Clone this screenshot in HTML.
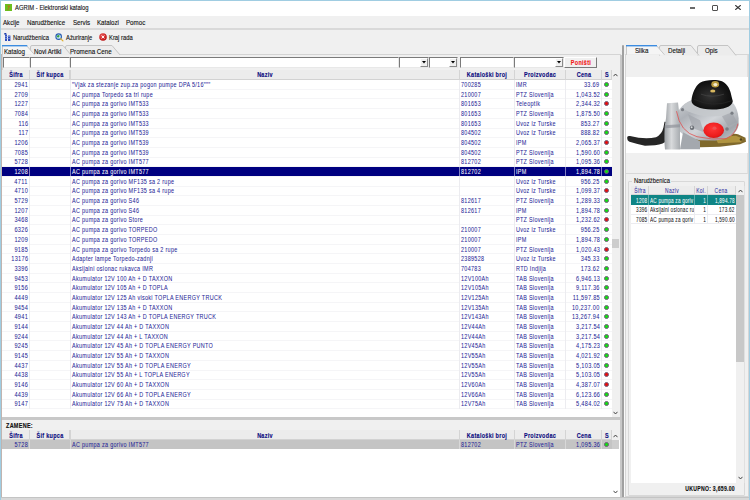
<!DOCTYPE html><html><head><meta charset="utf-8"><style>
*{margin:0;padding:0;box-sizing:border-box}
html,body{width:750px;height:500px;overflow:hidden;background:#f0f0f0;font-family:"Liberation Sans",sans-serif}
.a{position:absolute}
.c{position:absolute;white-space:nowrap;font-size:7px;color:#1e1e96}
.c span{display:inline-block;transform:scaleX(0.78);transform-origin:0 50%;letter-spacing:0.38px;-webkit-text-stroke:0.04px currentColor}
.c.r span{transform-origin:100% 50%;transform:scaleX(0.8)}
.c.m span{transform-origin:50% 50%}
.c.m{transform:translateX(-50%)}
.hd{font-weight:bold;color:#0c0c80}
.c.hd span{-webkit-text-stroke:0.15px currentColor}
.sel{color:#fff}
.n2{color:#2a2aa0;font-size:6.3px}
.sm{font-size:6.8px}
.c.sm span{transform:scaleX(0.69);letter-spacing:0.3px}
.dk{color:#111}
.dot{position:absolute;width:5px;height:5px;border-radius:50%;border:0.6px solid #705a78}
.ui{position:absolute;white-space:nowrap;font-size:7.2px;color:#111}
.ui span{display:inline-block;transform:scaleX(0.86);transform-origin:0 50%;-webkit-text-stroke:0.12px currentColor}
</style></head><body>
<div class="a" style="left:0;top:0;width:750px;height:500px;border:1px solid #a0cde2;border-bottom:none"></div>
<div class="a" style="left:1px;top:1px;width:748px;height:14.6px;background:#fff"></div>
<div class="a" style="left:4.7px;top:4px;width:7.3px;height:7.3px;background:#6cbf1e"></div>
<svg class="a" style="left:4.7px;top:4px" width="7.3" height="7.3" viewBox="0 0 10 10"><path d="M3 2 L7 2 L6 5 L4 9 L3 8 L5 5 Z" fill="#c8641e" opacity="0.85"/></svg>
<div class="ui" style="left:15px;top:4.2px;height:8px;line-height:8px;color:#111"><span style="transform:scaleX(0.815)">AGRIM - Elektronski katalog</span></div>
<div class="a" style="left:690px;top:7px;width:5.3px;height:1.5px;background:#6a6a6a"></div>
<div class="a" style="left:712px;top:4.8px;width:5.8px;height:5.8px;border:1.15px solid #505050;border-radius:1px"></div>
<svg class="a" style="left:735px;top:5.2px" width="6" height="5" viewBox="0 0 6 5"><path d="M0.3 0.2 L5.7 4.8 M5.7 0.2 L0.3 4.8" stroke="#333" stroke-width="1.1"/></svg>
<div class="a" style="left:1px;top:15.6px;width:748px;height:12.8px;background:#f0f0f0"></div>
<div class="ui" style="left:3.2px;top:18.9px;height:8px;line-height:8px"><span>Akcije</span></div>
<div class="ui" style="left:27.2px;top:18.9px;height:8px;line-height:8px"><span>Narudžbenice</span></div>
<div class="ui" style="left:72.5px;top:18.9px;height:8px;line-height:8px"><span>Servis</span></div>
<div class="ui" style="left:97.2px;top:18.9px;height:8px;line-height:8px"><span>Katalozi</span></div>
<div class="ui" style="left:126px;top:18.9px;height:8px;line-height:8px"><span>Pomoc</span></div>
<div class="a" style="left:1px;top:28.4px;width:748px;height:1.6px;background:#d9d9d9"></div>
<svg class="a" style="left:4px;top:33px" width="7" height="8" viewBox="0 0 7 8"><rect x="0.3" y="0" width="2" height="1.6" fill="#1a3aa8"/><rect x="1" y="1.5" width="2" height="6.5" fill="#3050c0"/><rect x="4" y="2.5" width="2.4" height="5.5" fill="#2a48b8"/><rect x="1.2" y="3" width="5" height="0.6" fill="#9ab0e8"/><rect x="1.2" y="5" width="5" height="0.6" fill="#9ab0e8"/></svg>
<div class="ui" style="left:13px;top:33.8px;height:8px;line-height:8px"><span style="transform:scaleX(0.81)">Narudžbenica</span></div>
<svg class="a" style="left:55.3px;top:33px" width="8.5" height="8.5" viewBox="0 0 10 10"><circle cx="4.3" cy="4.3" r="3.9" fill="#2a5cb0"/><circle cx="4.3" cy="4.3" r="2.6" fill="#c8ecf8"/><path d="M2.2 3.4 Q3.5 1.8 5.2 2.6 Q5.8 4.2 4.2 5.2 Q2.8 5.6 2.2 4.4 Z" fill="#3aa040"/><path d="M6.6 6.6 L9.3 9.3" stroke="#e0b030" stroke-width="1.5" stroke-linecap="round"/></svg>
<div class="ui" style="left:65.5px;top:33.8px;height:8px;line-height:8px"><span style="transform:scaleX(0.81)">Ažuriranje</span></div>
<svg class="a" style="left:99px;top:33.3px" width="8" height="8" viewBox="0 0 8 8"><defs><radialGradient id="kr" cx="0.4" cy="0.35" r="0.7"><stop offset="0" stop-color="#f06060"/><stop offset="1" stop-color="#b80a0a"/></radialGradient></defs><circle cx="4" cy="4" r="3.8" fill="url(#kr)"/><path d="M2.6 2.6 L5.4 5.4 M5.4 2.6 L2.6 5.4" stroke="#fff" stroke-width="0.95"/></svg>
<div class="ui" style="left:108.5px;top:33.8px;height:8px;line-height:8px"><span style="transform:scaleX(0.81)">Kraj rada</span></div>
<div class="a" style="left:1.5px;top:54px;width:619px;height:443px;background:#f0f0f0;border:1px solid #d4d4d4"></div>
<svg class="a" style="left:65px;top:44.8px" width="56" height="10.400000000000006" viewBox="0 0 56 10.400000000000006"><path d="M0.5 9.900000000000006 L0.5 2 Q0.5 0.5 2 0.5 L47 0.5 L55 9.900000000000006" fill="#ececec" stroke="#c4c4c4" stroke-width="1"/></svg><div class="ui" style="left:70px;top:47.599999999999994px;height:8px;line-height:8px"><span>Promena Cene</span></div>
<svg class="a" style="left:30px;top:44.8px" width="42" height="10.400000000000006" viewBox="0 0 42 10.400000000000006"><path d="M0.5 9.900000000000006 L0.5 2 Q0.5 0.5 2 0.5 L33 0.5 L41 9.900000000000006" fill="#ececec" stroke="#c4c4c4" stroke-width="1"/></svg><div class="ui" style="left:33.5px;top:47.599999999999994px;height:8px;line-height:8px"><span>Novi Artikl</span></div>
<svg class="a" style="left:1.5px;top:45px" width="33.5" height="10.200000000000003" viewBox="0 0 33.5 10.200000000000003"><path d="M0.5 9.700000000000003 L0.5 0.5 L24.5 0.5 L32.5 9.700000000000003" fill="#f5f5f5" stroke="#c8c8c8" stroke-width="1"/><rect x="0" y="0" width="25.3" height="1.4" fill="#3c8ce0"/></svg><div class="ui" style="left:3.5px;top:47.6px;height:8px;line-height:8px"><span>Katalog</span></div>
<div class="a" style="left:2.5px;top:57px;width:27.0px;height:10.6px;background:#fff;border-top:1.3px solid #7a7a7a;border-left:1.3px solid #7a7a7a;border-right:1px solid #e8e8e8;border-bottom:1px solid #e8e8e8"></div>
<div class="a" style="left:30px;top:57px;width:39.5px;height:10.6px;background:#fff;border-top:1.3px solid #7a7a7a;border-left:1.3px solid #7a7a7a;border-right:1px solid #e8e8e8;border-bottom:1px solid #e8e8e8"></div>
<div class="a" style="left:70px;top:57px;width:328.5px;height:10.6px;background:#fff;border-top:1.3px solid #7a7a7a;border-left:1.3px solid #7a7a7a;border-right:1px solid #e8e8e8;border-bottom:1px solid #e8e8e8"></div>
<div class="a" style="left:459.5px;top:57px;width:54.0px;height:10.6px;background:#fff;border-top:1.3px solid #7a7a7a;border-left:1.3px solid #7a7a7a;border-right:1px solid #e8e8e8;border-bottom:1px solid #e8e8e8"></div>
<div class="a" style="left:399px;top:57px;width:29.5px;height:10.6px;background:#fff;border-top:1.3px solid #7a7a7a;border-left:1.3px solid #7a7a7a;border-right:1px solid #e8e8e8;border-bottom:1px solid #e8e8e8"></div><div class="a" style="left:419.5px;top:58.3px;width:8px;height:8.6px;background:#f0f0f0;border-right:1px solid #8a8a8a;border-bottom:1px solid #8a8a8a;border-top:0.6px solid #fff;border-left:0.6px solid #fff"></div><svg class="a" style="left:421.5px;top:61.3px" width="4" height="3" viewBox="0 0 4 3"><path d="M0 0 L4 0 L2 2.5 Z" fill="#000"/></svg>
<div class="a" style="left:429px;top:57px;width:29px;height:10.6px;background:#fff;border-top:1.3px solid #7a7a7a;border-left:1.3px solid #7a7a7a;border-right:1px solid #e8e8e8;border-bottom:1px solid #e8e8e8"></div><div class="a" style="left:449px;top:58.3px;width:8px;height:8.6px;background:#f0f0f0;border-right:1px solid #8a8a8a;border-bottom:1px solid #8a8a8a;border-top:0.6px solid #fff;border-left:0.6px solid #fff"></div><svg class="a" style="left:451px;top:61.3px" width="4" height="3" viewBox="0 0 4 3"><path d="M0 0 L4 0 L2 2.5 Z" fill="#000"/></svg>
<div class="a" style="left:514px;top:57px;width:49.5px;height:10.6px;background:#fff;border-top:1.3px solid #7a7a7a;border-left:1.3px solid #7a7a7a;border-right:1px solid #e8e8e8;border-bottom:1px solid #e8e8e8"></div><div class="a" style="left:554.5px;top:58.3px;width:8px;height:8.6px;background:#f0f0f0;border-right:1px solid #8a8a8a;border-bottom:1px solid #8a8a8a;border-top:0.6px solid #fff;border-left:0.6px solid #fff"></div><svg class="a" style="left:556.5px;top:61.3px" width="4" height="3" viewBox="0 0 4 3"><path d="M0 0 L4 0 L2 2.5 Z" fill="#000"/></svg>
<div class="a" style="left:564px;top:57px;width:33px;height:10.6px;background:#f0f0f0;border-top:1px solid #fff;border-left:1px solid #fff;border-right:1.3px solid #7a7a7a;border-bottom:1.3px solid #7a7a7a"></div>
<div class="c hd" style="left:580.5px;top:58.2px;height:10.6px;line-height:10.6px;color:#f01818;transform:translateX(-50%)"><span style="transform-origin:50% 50%">Poništi</span></div>
<div class="a" style="left:2px;top:69.6px;width:618px;height:347.4px;background:#fff"></div>
<div class="a" style="left:2px;top:69.6px;width:610px;height:10.0px;background:#ececec;border-bottom:1px solid #d2d2d2"></div>
<div class="a" style="left:28.9px;top:69.6px;width:1.2px;height:10.0px;background:#d4d4d4"></div>
<div class="c m hd" style="left:15.75px;top:70.40px;height:10.00px;line-height:10.00px"><span>Šifra</span></div>
<div class="a" style="left:69.4px;top:69.6px;width:1.2px;height:10.0px;background:#d4d4d4"></div>
<div class="c m hd" style="left:49.75px;top:70.40px;height:10.00px;line-height:10.00px"><span>Šif kupca</span></div>
<div class="a" style="left:458.9px;top:69.6px;width:1.2px;height:10.0px;background:#d4d4d4"></div>
<div class="c m hd" style="left:264.75px;top:70.40px;height:10.00px;line-height:10.00px"><span>Naziv</span></div>
<div class="a" style="left:513.9px;top:69.6px;width:1.2px;height:10.0px;background:#d4d4d4"></div>
<div class="c m hd" style="left:487.00px;top:70.40px;height:10.00px;line-height:10.00px"><span>Kataloški broj</span></div>
<div class="a" style="left:564.9px;top:69.6px;width:1.2px;height:10.0px;background:#d4d4d4"></div>
<div class="c m hd" style="left:540.00px;top:70.40px;height:10.00px;line-height:10.00px"><span>Proizvodac</span></div>
<div class="a" style="left:600.9px;top:69.6px;width:1.2px;height:10.0px;background:#d4d4d4"></div>
<div class="c m hd" style="left:583.50px;top:70.40px;height:10.00px;line-height:10.00px"><span>Cena</span></div>
<div class="a" style="left:611.4px;top:69.6px;width:1.2px;height:10.0px;background:#d4d4d4"></div>
<div class="c m hd" style="left:606.75px;top:70.40px;height:10.00px;line-height:10.00px"><span>S</span></div>
<div class="a" style="left:2px;top:88.78px;width:610px;height:0.8px;background:#f5f5f7"></div>
<div class="a" style="left:2px;top:98.46px;width:610px;height:0.8px;background:#f5f5f7"></div>
<div class="a" style="left:2px;top:108.14px;width:610px;height:0.8px;background:#f5f5f7"></div>
<div class="a" style="left:2px;top:117.82px;width:610px;height:0.8px;background:#f5f5f7"></div>
<div class="a" style="left:2px;top:127.50px;width:610px;height:0.8px;background:#f5f5f7"></div>
<div class="a" style="left:2px;top:137.18px;width:610px;height:0.8px;background:#f5f5f7"></div>
<div class="a" style="left:2px;top:146.86px;width:610px;height:0.8px;background:#f5f5f7"></div>
<div class="a" style="left:2px;top:156.54px;width:610px;height:0.8px;background:#f5f5f7"></div>
<div class="a" style="left:2px;top:166.22px;width:610px;height:0.8px;background:#f5f5f7"></div>
<div class="a" style="left:2px;top:175.90px;width:610px;height:0.8px;background:#f5f5f7"></div>
<div class="a" style="left:2px;top:185.58px;width:610px;height:0.8px;background:#f5f5f7"></div>
<div class="a" style="left:2px;top:195.26px;width:610px;height:0.8px;background:#f5f5f7"></div>
<div class="a" style="left:2px;top:204.94px;width:610px;height:0.8px;background:#f5f5f7"></div>
<div class="a" style="left:2px;top:214.62px;width:610px;height:0.8px;background:#f5f5f7"></div>
<div class="a" style="left:2px;top:224.30px;width:610px;height:0.8px;background:#f5f5f7"></div>
<div class="a" style="left:2px;top:233.98px;width:610px;height:0.8px;background:#f5f5f7"></div>
<div class="a" style="left:2px;top:243.66px;width:610px;height:0.8px;background:#f5f5f7"></div>
<div class="a" style="left:2px;top:253.34px;width:610px;height:0.8px;background:#f5f5f7"></div>
<div class="a" style="left:2px;top:263.02px;width:610px;height:0.8px;background:#f5f5f7"></div>
<div class="a" style="left:2px;top:272.70px;width:610px;height:0.8px;background:#f5f5f7"></div>
<div class="a" style="left:2px;top:282.38px;width:610px;height:0.8px;background:#f5f5f7"></div>
<div class="a" style="left:2px;top:292.06px;width:610px;height:0.8px;background:#f5f5f7"></div>
<div class="a" style="left:2px;top:301.74px;width:610px;height:0.8px;background:#f5f5f7"></div>
<div class="a" style="left:2px;top:311.42px;width:610px;height:0.8px;background:#f5f5f7"></div>
<div class="a" style="left:2px;top:321.10px;width:610px;height:0.8px;background:#f5f5f7"></div>
<div class="a" style="left:2px;top:330.78px;width:610px;height:0.8px;background:#f5f5f7"></div>
<div class="a" style="left:2px;top:340.46px;width:610px;height:0.8px;background:#f5f5f7"></div>
<div class="a" style="left:2px;top:350.14px;width:610px;height:0.8px;background:#f5f5f7"></div>
<div class="a" style="left:2px;top:359.82px;width:610px;height:0.8px;background:#f5f5f7"></div>
<div class="a" style="left:2px;top:369.50px;width:610px;height:0.8px;background:#f5f5f7"></div>
<div class="a" style="left:2px;top:379.18px;width:610px;height:0.8px;background:#f5f5f7"></div>
<div class="a" style="left:2px;top:388.86px;width:610px;height:0.8px;background:#f5f5f7"></div>
<div class="a" style="left:2px;top:398.54px;width:610px;height:0.8px;background:#f5f5f7"></div>
<div class="a" style="left:2px;top:408.22px;width:610px;height:0.8px;background:#f5f5f7"></div>
<div class="a" style="left:29.0px;top:79.6px;width:0.8px;height:329.12px;background:#ececf0"></div>
<div class="a" style="left:69.5px;top:79.6px;width:0.8px;height:329.12px;background:#ececf0"></div>
<div class="a" style="left:459.0px;top:79.6px;width:0.8px;height:329.12px;background:#ececf0"></div>
<div class="a" style="left:514.0px;top:79.6px;width:0.8px;height:329.12px;background:#ececf0"></div>
<div class="a" style="left:565.0px;top:79.6px;width:0.8px;height:329.12px;background:#ececf0"></div>
<div class="a" style="left:601.0px;top:79.6px;width:0.8px;height:329.12px;background:#ececf0"></div>
<div class="c r t" style="right:722.10px;top:79.95px;height:9.68px;line-height:9.68px"><span>2941</span></div>
<div class="c t" style="left:71.60px;top:79.95px;height:9.68px;line-height:9.68px"><span>"Vjak za stezanje zup.za pogon pumpe DPA 5/16"""</span></div>
<div class="c t" style="left:461.10px;top:79.95px;height:9.68px;line-height:9.68px"><span>700285</span></div>
<div class="c t" style="left:516.10px;top:79.95px;height:9.68px;line-height:9.68px"><span>IMR</span></div>
<div class="c r t" style="right:150.10px;top:79.95px;height:9.68px;line-height:9.68px"><span>33.69</span></div>
<div class="dot" style="left:604.00px;top:81.94px;background:#10e010"></div>
<div class="c r t" style="right:722.10px;top:89.63px;height:9.68px;line-height:9.68px"><span>2709</span></div>
<div class="c t" style="left:71.60px;top:89.63px;height:9.68px;line-height:9.68px"><span>AC pumpa Torpedo sa tri rupe</span></div>
<div class="c t" style="left:461.10px;top:89.63px;height:9.68px;line-height:9.68px"><span>210007</span></div>
<div class="c t" style="left:516.10px;top:89.63px;height:9.68px;line-height:9.68px"><span>PTZ Slovenija</span></div>
<div class="c r t" style="right:150.10px;top:89.63px;height:9.68px;line-height:9.68px"><span>1,043.52</span></div>
<div class="dot" style="left:604.00px;top:91.62px;background:#10e010"></div>
<div class="c r t" style="right:722.10px;top:99.31px;height:9.68px;line-height:9.68px"><span>1227</span></div>
<div class="c t" style="left:71.60px;top:99.31px;height:9.68px;line-height:9.68px"><span>AC pumpa za gorivo IMT533</span></div>
<div class="c t" style="left:461.10px;top:99.31px;height:9.68px;line-height:9.68px"><span>801653</span></div>
<div class="c t" style="left:516.10px;top:99.31px;height:9.68px;line-height:9.68px"><span>Teleoptik</span></div>
<div class="c r t" style="right:150.10px;top:99.31px;height:9.68px;line-height:9.68px"><span>2,344.32</span></div>
<div class="dot" style="left:604.00px;top:101.30px;background:#e80c0c"></div>
<div class="c r t" style="right:722.10px;top:108.99px;height:9.68px;line-height:9.68px"><span>7084</span></div>
<div class="c t" style="left:71.60px;top:108.99px;height:9.68px;line-height:9.68px"><span>AC pumpa za gorivo IMT533</span></div>
<div class="c t" style="left:461.10px;top:108.99px;height:9.68px;line-height:9.68px"><span>801653</span></div>
<div class="c t" style="left:516.10px;top:108.99px;height:9.68px;line-height:9.68px"><span>PTZ Slovenija</span></div>
<div class="c r t" style="right:150.10px;top:108.99px;height:9.68px;line-height:9.68px"><span>1,875.50</span></div>
<div class="dot" style="left:604.00px;top:110.98px;background:#10e010"></div>
<div class="c r t" style="right:722.10px;top:118.67px;height:9.68px;line-height:9.68px"><span>116</span></div>
<div class="c t" style="left:71.60px;top:118.67px;height:9.68px;line-height:9.68px"><span>AC pumpa za gorivo IMT533</span></div>
<div class="c t" style="left:461.10px;top:118.67px;height:9.68px;line-height:9.68px"><span>801653</span></div>
<div class="c t" style="left:516.10px;top:118.67px;height:9.68px;line-height:9.68px"><span>Uvoz iz Turske</span></div>
<div class="c r t" style="right:150.10px;top:118.67px;height:9.68px;line-height:9.68px"><span>853.27</span></div>
<div class="dot" style="left:604.00px;top:120.66px;background:#10e010"></div>
<div class="c r t" style="right:722.10px;top:128.35px;height:9.68px;line-height:9.68px"><span>117</span></div>
<div class="c t" style="left:71.60px;top:128.35px;height:9.68px;line-height:9.68px"><span>AC pumpa za gorivo IMT539</span></div>
<div class="c t" style="left:461.10px;top:128.35px;height:9.68px;line-height:9.68px"><span>804502</span></div>
<div class="c t" style="left:516.10px;top:128.35px;height:9.68px;line-height:9.68px"><span>Uvoz iz Turske</span></div>
<div class="c r t" style="right:150.10px;top:128.35px;height:9.68px;line-height:9.68px"><span>888.82</span></div>
<div class="dot" style="left:604.00px;top:130.34px;background:#10e010"></div>
<div class="c r t" style="right:722.10px;top:138.03px;height:9.68px;line-height:9.68px"><span>1206</span></div>
<div class="c t" style="left:71.60px;top:138.03px;height:9.68px;line-height:9.68px"><span>AC pumpa za gorivo IMT539</span></div>
<div class="c t" style="left:461.10px;top:138.03px;height:9.68px;line-height:9.68px"><span>804502</span></div>
<div class="c t" style="left:516.10px;top:138.03px;height:9.68px;line-height:9.68px"><span>IPM</span></div>
<div class="c r t" style="right:150.10px;top:138.03px;height:9.68px;line-height:9.68px"><span>2,065.37</span></div>
<div class="dot" style="left:604.00px;top:140.02px;background:#e80c0c"></div>
<div class="c r t" style="right:722.10px;top:147.71px;height:9.68px;line-height:9.68px"><span>7085</span></div>
<div class="c t" style="left:71.60px;top:147.71px;height:9.68px;line-height:9.68px"><span>AC pumpa za gorivo IMT539</span></div>
<div class="c t" style="left:461.10px;top:147.71px;height:9.68px;line-height:9.68px"><span>804502</span></div>
<div class="c t" style="left:516.10px;top:147.71px;height:9.68px;line-height:9.68px"><span>PTZ Slovenija</span></div>
<div class="c r t" style="right:150.10px;top:147.71px;height:9.68px;line-height:9.68px"><span>1,590.60</span></div>
<div class="dot" style="left:604.00px;top:149.70px;background:#10e010"></div>
<div class="c r t" style="right:722.10px;top:157.39px;height:9.68px;line-height:9.68px"><span>5728</span></div>
<div class="c t" style="left:71.60px;top:157.39px;height:9.68px;line-height:9.68px"><span>AC pumpa za gorivo IMT577</span></div>
<div class="c t" style="left:461.10px;top:157.39px;height:9.68px;line-height:9.68px"><span>812702</span></div>
<div class="c t" style="left:516.10px;top:157.39px;height:9.68px;line-height:9.68px"><span>PTZ Slovenija</span></div>
<div class="c r t" style="right:150.10px;top:157.39px;height:9.68px;line-height:9.68px"><span>1,095.36</span></div>
<div class="dot" style="left:604.00px;top:159.38px;background:#10e010"></div>
<div class="a" style="left:2px;top:166.72px;width:610px;height:9.68px;background:#000080"></div>
<div class="a" style="left:29.0px;top:166.72px;width:0.8px;height:9.68px;background:#8080c0"></div>
<div class="a" style="left:69.5px;top:166.72px;width:0.8px;height:9.68px;background:#8080c0"></div>
<div class="a" style="left:459.0px;top:166.72px;width:0.8px;height:9.68px;background:#8080c0"></div>
<div class="a" style="left:514.0px;top:166.72px;width:0.8px;height:9.68px;background:#8080c0"></div>
<div class="a" style="left:565.0px;top:166.72px;width:0.8px;height:9.68px;background:#8080c0"></div>
<div class="a" style="left:601.0px;top:166.72px;width:0.8px;height:9.68px;background:#8080c0"></div>
<div class="c r sel" style="right:722.10px;top:167.07px;height:9.68px;line-height:9.68px"><span>1208</span></div>
<div class="c sel" style="left:71.60px;top:167.07px;height:9.68px;line-height:9.68px"><span>AC pumpa za gorivo IMT577</span></div>
<div class="c sel" style="left:461.10px;top:167.07px;height:9.68px;line-height:9.68px"><span>812702</span></div>
<div class="c sel" style="left:516.10px;top:167.07px;height:9.68px;line-height:9.68px"><span>IPM</span></div>
<div class="c r sel" style="right:150.10px;top:167.07px;height:9.68px;line-height:9.68px"><span>1,894.78</span></div>
<div class="dot" style="left:604.00px;top:169.06px;background:#10e010"></div>
<div class="c r t" style="right:722.10px;top:176.75px;height:9.68px;line-height:9.68px"><span>4711</span></div>
<div class="c t" style="left:71.60px;top:176.75px;height:9.68px;line-height:9.68px"><span>AC pumpa za gorivo MF135 sa 2 rupe</span></div>

<div class="c t" style="left:516.10px;top:176.75px;height:9.68px;line-height:9.68px"><span>Uvoz iz Turske</span></div>
<div class="c r t" style="right:150.10px;top:176.75px;height:9.68px;line-height:9.68px"><span>956.25</span></div>
<div class="dot" style="left:604.00px;top:178.74px;background:#10e010"></div>
<div class="c r t" style="right:722.10px;top:186.43px;height:9.68px;line-height:9.68px"><span>4710</span></div>
<div class="c t" style="left:71.60px;top:186.43px;height:9.68px;line-height:9.68px"><span>AC pumpa za gorivo MF135 sa 4 rupe</span></div>

<div class="c t" style="left:516.10px;top:186.43px;height:9.68px;line-height:9.68px"><span>Uvoz iz Turske</span></div>
<div class="c r t" style="right:150.10px;top:186.43px;height:9.68px;line-height:9.68px"><span>1,099.37</span></div>
<div class="dot" style="left:604.00px;top:188.42px;background:#e80c0c"></div>
<div class="c r t" style="right:722.10px;top:196.11px;height:9.68px;line-height:9.68px"><span>5729</span></div>
<div class="c t" style="left:71.60px;top:196.11px;height:9.68px;line-height:9.68px"><span>AC pumpa za gorivo S46</span></div>
<div class="c t" style="left:461.10px;top:196.11px;height:9.68px;line-height:9.68px"><span>812617</span></div>
<div class="c t" style="left:516.10px;top:196.11px;height:9.68px;line-height:9.68px"><span>PTZ Slovenija</span></div>
<div class="c r t" style="right:150.10px;top:196.11px;height:9.68px;line-height:9.68px"><span>1,289.33</span></div>
<div class="dot" style="left:604.00px;top:198.10px;background:#10e010"></div>
<div class="c r t" style="right:722.10px;top:205.79px;height:9.68px;line-height:9.68px"><span>1207</span></div>
<div class="c t" style="left:71.60px;top:205.79px;height:9.68px;line-height:9.68px"><span>AC pumpa za gorivo S46</span></div>
<div class="c t" style="left:461.10px;top:205.79px;height:9.68px;line-height:9.68px"><span>812617</span></div>
<div class="c t" style="left:516.10px;top:205.79px;height:9.68px;line-height:9.68px"><span>IPM</span></div>
<div class="c r t" style="right:150.10px;top:205.79px;height:9.68px;line-height:9.68px"><span>1,894.78</span></div>
<div class="dot" style="left:604.00px;top:207.78px;background:#10e010"></div>
<div class="c r t" style="right:722.10px;top:215.47px;height:9.68px;line-height:9.68px"><span>3468</span></div>
<div class="c t" style="left:71.60px;top:215.47px;height:9.68px;line-height:9.68px"><span>AC pumpa za gorivo Store</span></div>

<div class="c t" style="left:516.10px;top:215.47px;height:9.68px;line-height:9.68px"><span>PTZ Slovenija</span></div>
<div class="c r t" style="right:150.10px;top:215.47px;height:9.68px;line-height:9.68px"><span>1,232.62</span></div>
<div class="dot" style="left:604.00px;top:217.46px;background:#e80c0c"></div>
<div class="c r t" style="right:722.10px;top:225.15px;height:9.68px;line-height:9.68px"><span>6326</span></div>
<div class="c t" style="left:71.60px;top:225.15px;height:9.68px;line-height:9.68px"><span>AC pumpa za gorivo TORPEDO</span></div>
<div class="c t" style="left:461.10px;top:225.15px;height:9.68px;line-height:9.68px"><span>210007</span></div>
<div class="c t" style="left:516.10px;top:225.15px;height:9.68px;line-height:9.68px"><span>Uvoz iz Turske</span></div>
<div class="c r t" style="right:150.10px;top:225.15px;height:9.68px;line-height:9.68px"><span>956.25</span></div>
<div class="dot" style="left:604.00px;top:227.14px;background:#10e010"></div>
<div class="c r t" style="right:722.10px;top:234.83px;height:9.68px;line-height:9.68px"><span>1209</span></div>
<div class="c t" style="left:71.60px;top:234.83px;height:9.68px;line-height:9.68px"><span>AC pumpa za gorivo TORPEDO</span></div>
<div class="c t" style="left:461.10px;top:234.83px;height:9.68px;line-height:9.68px"><span>210007</span></div>
<div class="c t" style="left:516.10px;top:234.83px;height:9.68px;line-height:9.68px"><span>IPM</span></div>
<div class="c r t" style="right:150.10px;top:234.83px;height:9.68px;line-height:9.68px"><span>1,894.78</span></div>
<div class="dot" style="left:604.00px;top:236.82px;background:#10e010"></div>
<div class="c r t" style="right:722.10px;top:244.51px;height:9.68px;line-height:9.68px"><span>9185</span></div>
<div class="c t" style="left:71.60px;top:244.51px;height:9.68px;line-height:9.68px"><span>AC pumpa za gorivo Torpedo sa 2 rupe</span></div>
<div class="c t" style="left:461.10px;top:244.51px;height:9.68px;line-height:9.68px"><span>210007</span></div>
<div class="c t" style="left:516.10px;top:244.51px;height:9.68px;line-height:9.68px"><span>PTZ Slovenija</span></div>
<div class="c r t" style="right:150.10px;top:244.51px;height:9.68px;line-height:9.68px"><span>1,020.43</span></div>
<div class="dot" style="left:604.00px;top:246.50px;background:#e80c0c"></div>
<div class="c r t" style="right:722.10px;top:254.19px;height:9.68px;line-height:9.68px"><span>13176</span></div>
<div class="c t" style="left:71.60px;top:254.19px;height:9.68px;line-height:9.68px"><span>Adapter lampe Torpedo-zadnji</span></div>
<div class="c t" style="left:461.10px;top:254.19px;height:9.68px;line-height:9.68px"><span>2389528</span></div>
<div class="c t" style="left:516.10px;top:254.19px;height:9.68px;line-height:9.68px"><span>Uvoz iz Turske</span></div>
<div class="c r t" style="right:150.10px;top:254.19px;height:9.68px;line-height:9.68px"><span>345.33</span></div>
<div class="dot" style="left:604.00px;top:256.18px;background:#10e010"></div>
<div class="c r t" style="right:722.10px;top:263.87px;height:9.68px;line-height:9.68px"><span>3396</span></div>
<div class="c t" style="left:71.60px;top:263.87px;height:9.68px;line-height:9.68px"><span>Aksijalni oslonac rukavca IMR</span></div>
<div class="c t" style="left:461.10px;top:263.87px;height:9.68px;line-height:9.68px"><span>704783</span></div>
<div class="c t" style="left:516.10px;top:263.87px;height:9.68px;line-height:9.68px"><span>RTD Indjija</span></div>
<div class="c r t" style="right:150.10px;top:263.87px;height:9.68px;line-height:9.68px"><span>173.62</span></div>
<div class="dot" style="left:604.00px;top:265.86px;background:#10e010"></div>
<div class="c r t" style="right:722.10px;top:273.55px;height:9.68px;line-height:9.68px"><span>9453</span></div>
<div class="c t" style="left:71.60px;top:273.55px;height:9.68px;line-height:9.68px"><span>Akumulator 12V 100 Ah + D TAXXON</span></div>
<div class="c t" style="left:461.10px;top:273.55px;height:9.68px;line-height:9.68px"><span>12V100Ah</span></div>
<div class="c t" style="left:516.10px;top:273.55px;height:9.68px;line-height:9.68px"><span>TAB Slovenija</span></div>
<div class="c r t" style="right:150.10px;top:273.55px;height:9.68px;line-height:9.68px"><span>6,946.13</span></div>
<div class="dot" style="left:604.00px;top:275.54px;background:#10e010"></div>
<div class="c r t" style="right:722.10px;top:283.23px;height:9.68px;line-height:9.68px"><span>9156</span></div>
<div class="c t" style="left:71.60px;top:283.23px;height:9.68px;line-height:9.68px"><span>Akumulator 12V 105 Ah + D TOPLA</span></div>
<div class="c t" style="left:461.10px;top:283.23px;height:9.68px;line-height:9.68px"><span>12V105Ah</span></div>
<div class="c t" style="left:516.10px;top:283.23px;height:9.68px;line-height:9.68px"><span>TAB Slovenija</span></div>
<div class="c r t" style="right:150.10px;top:283.23px;height:9.68px;line-height:9.68px"><span>9,117.36</span></div>
<div class="dot" style="left:604.00px;top:285.22px;background:#10e010"></div>
<div class="c r t" style="right:722.10px;top:292.91px;height:9.68px;line-height:9.68px"><span>4449</span></div>
<div class="c t" style="left:71.60px;top:292.91px;height:9.68px;line-height:9.68px"><span>Akumulator 12V 125 Ah visoki TOPLA ENERGY TRUCK</span></div>
<div class="c t" style="left:461.10px;top:292.91px;height:9.68px;line-height:9.68px"><span>12V125Ah</span></div>
<div class="c t" style="left:516.10px;top:292.91px;height:9.68px;line-height:9.68px"><span>TAB Slovenija</span></div>
<div class="c r t" style="right:150.10px;top:292.91px;height:9.68px;line-height:9.68px"><span>11,597.85</span></div>
<div class="dot" style="left:604.00px;top:294.90px;background:#10e010"></div>
<div class="c r t" style="right:722.10px;top:302.59px;height:9.68px;line-height:9.68px"><span>9454</span></div>
<div class="c t" style="left:71.60px;top:302.59px;height:9.68px;line-height:9.68px"><span>Akumulator 12V 135 Ah + D TAXXON</span></div>
<div class="c t" style="left:461.10px;top:302.59px;height:9.68px;line-height:9.68px"><span>12V135Ah</span></div>
<div class="c t" style="left:516.10px;top:302.59px;height:9.68px;line-height:9.68px"><span>TAB Slovenija</span></div>
<div class="c r t" style="right:150.10px;top:302.59px;height:9.68px;line-height:9.68px"><span>10,237.00</span></div>
<div class="dot" style="left:604.00px;top:304.58px;background:#10e010"></div>
<div class="c r t" style="right:722.10px;top:312.27px;height:9.68px;line-height:9.68px"><span>4941</span></div>
<div class="c t" style="left:71.60px;top:312.27px;height:9.68px;line-height:9.68px"><span>Akumulator 12V 143 Ah + D TOPLA ENERGY TRUCK</span></div>
<div class="c t" style="left:461.10px;top:312.27px;height:9.68px;line-height:9.68px"><span>12V143Ah</span></div>
<div class="c t" style="left:516.10px;top:312.27px;height:9.68px;line-height:9.68px"><span>TAB Slovenija</span></div>
<div class="c r t" style="right:150.10px;top:312.27px;height:9.68px;line-height:9.68px"><span>13,267.94</span></div>
<div class="dot" style="left:604.00px;top:314.26px;background:#10e010"></div>
<div class="c r t" style="right:722.10px;top:321.95px;height:9.68px;line-height:9.68px"><span>9144</span></div>
<div class="c t" style="left:71.60px;top:321.95px;height:9.68px;line-height:9.68px"><span>Akumulator 12V 44 Ah + D TAXXON</span></div>
<div class="c t" style="left:461.10px;top:321.95px;height:9.68px;line-height:9.68px"><span>12V44Ah</span></div>
<div class="c t" style="left:516.10px;top:321.95px;height:9.68px;line-height:9.68px"><span>TAB Slovenija</span></div>
<div class="c r t" style="right:150.10px;top:321.95px;height:9.68px;line-height:9.68px"><span>3,217.54</span></div>
<div class="dot" style="left:604.00px;top:323.94px;background:#10e010"></div>
<div class="c r t" style="right:722.10px;top:331.63px;height:9.68px;line-height:9.68px"><span>9244</span></div>
<div class="c t" style="left:71.60px;top:331.63px;height:9.68px;line-height:9.68px"><span>Akumulator 12V 44 Ah + L TAXXON</span></div>
<div class="c t" style="left:461.10px;top:331.63px;height:9.68px;line-height:9.68px"><span>12V44Ah</span></div>
<div class="c t" style="left:516.10px;top:331.63px;height:9.68px;line-height:9.68px"><span>TAB Slovenija</span></div>
<div class="c r t" style="right:150.10px;top:331.63px;height:9.68px;line-height:9.68px"><span>3,217.54</span></div>
<div class="dot" style="left:604.00px;top:333.62px;background:#10e010"></div>
<div class="c r t" style="right:722.10px;top:341.31px;height:9.68px;line-height:9.68px"><span>9245</span></div>
<div class="c t" style="left:71.60px;top:341.31px;height:9.68px;line-height:9.68px"><span>Akumulator 12V 45 Ah + D TOPLA ENERGY PUNTO</span></div>
<div class="c t" style="left:461.10px;top:341.31px;height:9.68px;line-height:9.68px"><span>12V45Ah</span></div>
<div class="c t" style="left:516.10px;top:341.31px;height:9.68px;line-height:9.68px"><span>TAB Slovenija</span></div>
<div class="c r t" style="right:150.10px;top:341.31px;height:9.68px;line-height:9.68px"><span>4,175.23</span></div>
<div class="dot" style="left:604.00px;top:343.30px;background:#10e010"></div>
<div class="c r t" style="right:722.10px;top:350.99px;height:9.68px;line-height:9.68px"><span>9145</span></div>
<div class="c t" style="left:71.60px;top:350.99px;height:9.68px;line-height:9.68px"><span>Akumulator 12V 55 Ah + D TAXXON</span></div>
<div class="c t" style="left:461.10px;top:350.99px;height:9.68px;line-height:9.68px"><span>12V55Ah</span></div>
<div class="c t" style="left:516.10px;top:350.99px;height:9.68px;line-height:9.68px"><span>TAB Slovenija</span></div>
<div class="c r t" style="right:150.10px;top:350.99px;height:9.68px;line-height:9.68px"><span>4,021.92</span></div>
<div class="dot" style="left:604.00px;top:352.98px;background:#10e010"></div>
<div class="c r t" style="right:722.10px;top:360.67px;height:9.68px;line-height:9.68px"><span>4437</span></div>
<div class="c t" style="left:71.60px;top:360.67px;height:9.68px;line-height:9.68px"><span>Akumulator 12V 55 Ah + D TOPLA ENERGY</span></div>
<div class="c t" style="left:461.10px;top:360.67px;height:9.68px;line-height:9.68px"><span>12V55Ah</span></div>
<div class="c t" style="left:516.10px;top:360.67px;height:9.68px;line-height:9.68px"><span>TAB Slovenija</span></div>
<div class="c r t" style="right:150.10px;top:360.67px;height:9.68px;line-height:9.68px"><span>5,103.05</span></div>
<div class="dot" style="left:604.00px;top:362.66px;background:#10e010"></div>
<div class="c r t" style="right:722.10px;top:370.35px;height:9.68px;line-height:9.68px"><span>4438</span></div>
<div class="c t" style="left:71.60px;top:370.35px;height:9.68px;line-height:9.68px"><span>Akumulator 12V 55 Ah + L TOPLA ENERGY</span></div>
<div class="c t" style="left:461.10px;top:370.35px;height:9.68px;line-height:9.68px"><span>12V55Ah</span></div>
<div class="c t" style="left:516.10px;top:370.35px;height:9.68px;line-height:9.68px"><span>TAB Slovenija</span></div>
<div class="c r t" style="right:150.10px;top:370.35px;height:9.68px;line-height:9.68px"><span>5,103.05</span></div>
<div class="dot" style="left:604.00px;top:372.34px;background:#e80c0c"></div>
<div class="c r t" style="right:722.10px;top:380.03px;height:9.68px;line-height:9.68px"><span>9146</span></div>
<div class="c t" style="left:71.60px;top:380.03px;height:9.68px;line-height:9.68px"><span>Akumulator 12V 60 Ah + D TAXXON</span></div>
<div class="c t" style="left:461.10px;top:380.03px;height:9.68px;line-height:9.68px"><span>12V60Ah</span></div>
<div class="c t" style="left:516.10px;top:380.03px;height:9.68px;line-height:9.68px"><span>TAB Slovenija</span></div>
<div class="c r t" style="right:150.10px;top:380.03px;height:9.68px;line-height:9.68px"><span>4,387.07</span></div>
<div class="dot" style="left:604.00px;top:382.02px;background:#e80c0c"></div>
<div class="c r t" style="right:722.10px;top:389.71px;height:9.68px;line-height:9.68px"><span>4439</span></div>
<div class="c t" style="left:71.60px;top:389.71px;height:9.68px;line-height:9.68px"><span>Akumulator 12V 66 Ah + D TOPLA ENERGY</span></div>
<div class="c t" style="left:461.10px;top:389.71px;height:9.68px;line-height:9.68px"><span>12V66Ah</span></div>
<div class="c t" style="left:516.10px;top:389.71px;height:9.68px;line-height:9.68px"><span>TAB Slovenija</span></div>
<div class="c r t" style="right:150.10px;top:389.71px;height:9.68px;line-height:9.68px"><span>6,123.66</span></div>
<div class="dot" style="left:604.00px;top:391.70px;background:#10e010"></div>
<div class="c r t" style="right:722.10px;top:399.39px;height:9.68px;line-height:9.68px"><span>9147</span></div>
<div class="c t" style="left:71.60px;top:399.39px;height:9.68px;line-height:9.68px"><span>Akumulator 12V 75 Ah + D TAXXON</span></div>
<div class="c t" style="left:461.10px;top:399.39px;height:9.68px;line-height:9.68px"><span>12V75Ah</span></div>
<div class="c t" style="left:516.10px;top:399.39px;height:9.68px;line-height:9.68px"><span>TAB Slovenija</span></div>
<div class="c r t" style="right:150.10px;top:399.39px;height:9.68px;line-height:9.68px"><span>5,484.02</span></div>
<div class="dot" style="left:604.00px;top:401.38px;background:#10e010"></div>
<div class="a" style="left:612px;top:69.6px;width:8px;height:347.4px;background:#f0f0f0"></div>
<svg class="a" style="left:613px;top:72.5px" width="5" height="4" viewBox="0 0 5 4"><path d="M0.5 3.2 L2.5 1 L4.5 3.2" stroke="#333" stroke-width="0.9" fill="none"/></svg>
<svg class="a" style="left:613px;top:410.5px" width="5" height="4" viewBox="0 0 5 4"><path d="M0.5 0.8 L2.5 3 L4.5 0.8" stroke="#333" stroke-width="0.9" fill="none"/></svg>
<div class="a" style="left:612.3px;top:239.2px;width:7px;height:8.8px;background:#cdcdcd"></div>
<div class="a" style="left:2px;top:417px;width:618px;height:3px;background:#c8c8c8"></div>
<div class="a" style="left:2px;top:420px;width:618px;height:10px;background:#f0f0f0"></div>
<div class="c hd" style="left:6px;top:420.8px;height:9.5px;line-height:9.5px;color:#111"><span>ZAMENE:</span></div>
<div class="a" style="left:2px;top:430px;width:618px;height:66.5px;background:#fff"></div>
<div class="a" style="left:2px;top:430px;width:610px;height:10.0px;background:#ececec;border-bottom:1px solid #d2d2d2"></div>
<div class="a" style="left:28.9px;top:430px;width:1.2px;height:10.0px;background:#d4d4d4"></div>
<div class="c m hd" style="left:15.75px;top:430.80px;height:10.00px;line-height:10.00px"><span>Šifra</span></div>
<div class="a" style="left:69.4px;top:430px;width:1.2px;height:10.0px;background:#d4d4d4"></div>
<div class="c m hd" style="left:49.75px;top:430.80px;height:10.00px;line-height:10.00px"><span>Šif kupca</span></div>
<div class="a" style="left:458.9px;top:430px;width:1.2px;height:10.0px;background:#d4d4d4"></div>
<div class="c m hd" style="left:264.75px;top:430.80px;height:10.00px;line-height:10.00px"><span>Naziv</span></div>
<div class="a" style="left:513.9px;top:430px;width:1.2px;height:10.0px;background:#d4d4d4"></div>
<div class="c m hd" style="left:487.00px;top:430.80px;height:10.00px;line-height:10.00px"><span>Kataloški broj</span></div>
<div class="a" style="left:564.9px;top:430px;width:1.2px;height:10.0px;background:#d4d4d4"></div>
<div class="c m hd" style="left:540.00px;top:430.80px;height:10.00px;line-height:10.00px"><span>Proizvodac</span></div>
<div class="a" style="left:600.9px;top:430px;width:1.2px;height:10.0px;background:#d4d4d4"></div>
<div class="c m hd" style="left:583.50px;top:430.80px;height:10.00px;line-height:10.00px"><span>Cena</span></div>
<div class="a" style="left:611.4px;top:430px;width:1.2px;height:10.0px;background:#d4d4d4"></div>
<div class="c m hd" style="left:606.75px;top:430.80px;height:10.00px;line-height:10.00px"><span>S</span></div>
<div class="a" style="left:2px;top:440px;width:610px;height:9.2px;background:#c4c4c4"></div>
<div class="a" style="left:29.0px;top:440px;width:0.8px;height:9.2px;background:#d8d8d8"></div>
<div class="a" style="left:69.5px;top:440px;width:0.8px;height:9.2px;background:#d8d8d8"></div>
<div class="a" style="left:459.0px;top:440px;width:0.8px;height:9.2px;background:#d8d8d8"></div>
<div class="a" style="left:514.0px;top:440px;width:0.8px;height:9.2px;background:#d8d8d8"></div>
<div class="a" style="left:565.0px;top:440px;width:0.8px;height:9.2px;background:#d8d8d8"></div>
<div class="a" style="left:601.0px;top:440px;width:0.8px;height:9.2px;background:#d8d8d8"></div>
<div class="c r t" style="right:722.10px;top:440.00px;height:9.20px;line-height:9.20px"><span>5728</span></div>
<div class="c t" style="left:71.60px;top:440.00px;height:9.20px;line-height:9.20px"><span>AC pumpa za gorivo IMT577</span></div>
<div class="c t" style="left:461.10px;top:440.00px;height:9.20px;line-height:9.20px"><span>812702</span></div>
<div class="c t" style="left:516.10px;top:440.00px;height:9.20px;line-height:9.20px"><span>PTZ Slovenija</span></div>
<div class="c r t" style="right:150.10px;top:440.00px;height:9.20px;line-height:9.20px"><span>1,095.36</span></div>
<div class="dot" style="left:603.80px;top:442.10px;background:#10e010"></div>
<div class="a" style="left:612px;top:430px;width:8px;height:10.0px;background:#f0f0f0"></div>
<svg class="a" style="left:613px;top:433.5px" width="5" height="4" viewBox="0 0 5 4"><path d="M0.5 3.2 L2.5 1 L4.5 3.2" stroke="#333" stroke-width="0.9" fill="none"/></svg>
<div class="a" style="left:612.3px;top:440px;width:7px;height:9.2px;background:#cdcdcd"></div>
<svg class="a" style="left:613px;top:490px" width="5" height="4" viewBox="0 0 5 4"><path d="M0.5 0.8 L2.5 3 L4.5 0.8" stroke="#333" stroke-width="0.9" fill="none"/></svg>
<div class="a" style="left:1px;top:496.5px;width:748px;height:1.5px;background:#c4c4c4"></div>
<div class="a" style="left:1px;top:498px;width:748px;height:2px;background:#d8d8d8"></div>
<div class="a" style="left:1px;top:54px;width:1px;height:443px;background:#c0b4b0"></div>
<div class="a" style="left:620.6px;top:44px;width:4.5px;height:453px;background:#f0f0f0"></div>
<div class="a" style="left:620px;top:54.5px;width:2px;height:442.5px;background:#c8c8c8"></div>
<div class="a" style="left:622px;top:44.5px;width:2px;height:452.5px;background:#a0a0a0;border-radius:1px 1px 0 0"></div>
<div class="a" style="left:624px;top:55px;width:1.5px;height:442px;background:#fafafa"></div>
<div class="a" style="left:625px;top:54px;width:123.5px;height:443px;background:#f0f0f0;border:1px solid #d6d6d6"></div>
<svg class="a" style="left:697px;top:44.6px" width="40" height="11" viewBox="0 0 40 11"><path d="M0.5 10.5 L0.5 2 Q0.5 0.5 2 0.5 L31 0.5 L39 10.5" fill="#ececec" stroke="#c4c4c4" stroke-width="1"/></svg><div class="ui" style="left:705.4px;top:47.4px;height:8px;line-height:8px"><span>Opis</span></div>
<svg class="a" style="left:659px;top:44.6px" width="41" height="11" viewBox="0 0 41 11"><path d="M0.5 10.5 L0.5 2 Q0.5 0.5 2 0.5 L32 0.5 L40 10.5" fill="#ececec" stroke="#c4c4c4" stroke-width="1"/></svg><div class="ui" style="left:667.6px;top:47.4px;height:8px;line-height:8px"><span>Detalji</span></div>
<svg class="a" style="left:625.5px;top:45px" width="40" height="10" viewBox="0 0 40 10"><path d="M0.5 9.8 L0.5 0.5 L30.5 0.5 L38.5 9.8" fill="#f5f5f5" stroke="#c8c8c8" stroke-width="1"/><rect x="0" y="0" width="31" height="1.4" fill="#3c8ce0"/></svg>
<div class="ui" style="left:635px;top:47px;height:8px;line-height:8px"><span>Slika</span></div>
<div class="a" style="left:625.6px;top:55px;width:122.6px;height:119px;border-bottom:1px solid #d8d8d8;border-right:1px solid #e0e0e0"></div>
<div class="a" style="left:626px;top:76.8px;width:121.5px;height:75.8px;background:#fff"></div>
<svg class="a" style="left:626px;top:76.8px" width="121.5" height="74.8" viewBox="626 76.8 121.5 74.8">
<defs>
<radialGradient id="dome" cx="0.45" cy="0.55" r="0.7"><stop offset="0" stop-color="#333"/><stop offset="0.6" stop-color="#141414"/><stop offset="1" stop-color="#060606"/></radialGradient>
<linearGradient id="metal" x1="0" y1="0" x2="1" y2="1"><stop offset="0" stop-color="#d6d9dd"/><stop offset="0.3" stop-color="#aeb2b8"/><stop offset="0.55" stop-color="#d2d5d9"/><stop offset="0.8" stop-color="#a2a6ac"/><stop offset="1" stop-color="#c8cbcf"/></linearGradient>
<linearGradient id="metal2" x1="0" y1="0" x2="1" y2="0"><stop offset="0" stop-color="#9ca0a4"/><stop offset="0.45" stop-color="#d8dadc"/><stop offset="1" stop-color="#a8acb0"/></linearGradient>
<radialGradient id="red" cx="0.45" cy="0.4" r="0.7"><stop offset="0" stop-color="#ff3838"/><stop offset="0.7" stop-color="#ec1c1c"/><stop offset="1" stop-color="#c81010"/></radialGradient>
</defs>
<path d="M627.2 137 Q627.5 135.5 630 135.8 Q645 139.5 656 137 Q662 134 663.5 127 L664.5 121.5 L668 122 L667.5 139.5 Q664 144 655 145 L645 145.5 Q636 143.5 629.5 141.5 Q627 140.5 627.2 137 Z" fill="#262626"/>
<path d="M692 134 L728 132.5 L738 134 L745.5 137.5 L746 141.5 L740 144 L720 146.5 L700 147 L692 142 Z" fill="#80692c"/>
<path d="M715 137 L736 135.5 L743 138.5 L741 142 L718 143 Z" fill="#b09440"/>
<circle cx="741" cy="139.3" r="1.3" fill="#4e4018"/>
<path d="M676 118 Q678 104 696 98 L722 96 Q737 100 738.6 118 L738.6 125 Q736 138 715 140.2 L700 140 Q680 136 676 126 Z" fill="url(#metal)"/>
<path d="M683 132 L700 141 L700 149 L680 149 Z" fill="#a4a8ae"/>
<path d="M667 103 L678 102.3 L680 120 L680 149.3 L665 149.3 Q664 140 664.7 126 L666 118 Z" fill="url(#metal2)"/>
<path d="M665 125 L680 124 L680 127 L665 128 Z" fill="#8e9298" opacity="0.7"/>
<path d="M676.5 111 Q680 132 697 136.5 Q712 140 726 138.5 Q736 134 738 123.5" fill="none" stroke="#e24a4a" stroke-width="0.75"/>
<path d="M684 104 Q697 97 712 97 L734 104 L735 112 Q722 117 704 116 Q690 113 684 109 Z" fill="#c6c9cd" opacity="0.85"/>
<path d="M688 114 L700 120 L704 132 L693 128 Z" fill="#9ea2a8" opacity="0.6"/>
<path d="M722 116 L732 112 L737 122 L728 126 Z" fill="#9ea2a8" opacity="0.6"/>
<circle cx="692" cy="127.5" r="2.2" fill="#6a6e74"/><circle cx="691.6" cy="127" r="1" fill="#d8dadc"/>
<circle cx="727" cy="128.8" r="1.8" fill="#7a7e84"/>
<circle cx="682.5" cy="109.5" r="1.6" fill="#7a7e84"/>
<circle cx="732" cy="113" r="1.6" fill="#7a7e84"/>
<path d="M691.5 100 C692 94 695 86 700 82.5 C705 79.5 716 79 722 81 C728 84 730.5 90 731.5 96 L732.8 101 C732 107 722 109.5 712 109.3 C700 109 691 105.5 691.5 100 Z" fill="url(#dome)"/>
<path d="M694 99 Q712 108 732 100.5" stroke="#2a2a2a" stroke-width="0.6" fill="none"/>
<path d="M701 94 Q712 98 724 94" stroke="#555" stroke-width="0.8" fill="none" opacity="0.6"/>
<ellipse cx="715.2" cy="84" rx="3.9" ry="3.2" fill="#b89a3c"/>
<ellipse cx="715.4" cy="84.4" rx="2" ry="1.6" fill="#f2ecd0"/>
<ellipse cx="712.8" cy="90.8" rx="2.6" ry="1.6" fill="#d8b860"/>
<ellipse cx="713.7" cy="130" rx="10.3" ry="7.7" fill="url(#red)"/>
<ellipse cx="714.5" cy="128" rx="2" ry="1.6" fill="#f05050"/>
</svg>
<div class="a" style="left:628.4px;top:180.6px;width:117px;height:315px;border:1px solid #d8d8d8;border-radius:1px"></div>
<div class="a" style="left:632px;top:177px;width:39px;height:8px;background:#f0f0f0"></div>
<div class="ui" style="left:633.5px;top:177px;height:8px;line-height:8px"><span style="transform:scaleX(0.81)">Narudžbenica</span></div>
<div class="a" style="left:630.5px;top:186px;width:114px;height:296.5px;background:#fff;border-right:1px solid #e0e0e0"></div>
<div class="a" style="left:630.5px;top:186px;width:105px;height:9.2px;background:#ececec;border-bottom:1px solid #d6d6d6"></div>
<div class="a" style="left:647.9px;top:186px;width:1.2px;height:9.2px;background:#d4d4d4"></div>
<div class="c m n2" style="left:639.50px;top:186.00px;height:9.20px;line-height:9.20px"><span>Šifra</span></div>
<div class="a" style="left:694.0px;top:186px;width:1.2px;height:9.2px;background:#d4d4d4"></div>
<div class="c m n2" style="left:671.55px;top:186.00px;height:9.20px;line-height:9.20px"><span>Naziv</span></div>
<div class="a" style="left:706.6999999999999px;top:186px;width:1.2px;height:9.2px;background:#d4d4d4"></div>
<div class="c m n2" style="left:700.95px;top:186.00px;height:9.20px;line-height:9.20px"><span>Kol.</span></div>
<div class="a" style="left:734.9px;top:186px;width:1.2px;height:9.2px;background:#d4d4d4"></div>
<div class="c m n2" style="left:721.40px;top:186.00px;height:9.20px;line-height:9.20px"><span>Cena</span></div>
<div class="a" style="left:630.5px;top:195.2px;width:105px;height:9.4px;background:#0f8585"></div>
<div class="a" style="left:648.0px;top:195.2px;width:0.8px;height:9.4px;background:#5fb0b0"></div>
<div class="a" style="left:694.1px;top:195.2px;width:0.8px;height:9.4px;background:#5fb0b0"></div>
<div class="a" style="left:706.8px;top:195.2px;width:0.8px;height:9.4px;background:#5fb0b0"></div>
<div class="a" style="left:649.5px;top:195.2px;width:44.60000000000002px;height:9.4px;overflow:hidden"><div class="c sel sm" style="left:0.40px;top:0.70px;height:9.40px;line-height:9.40px"><span>AC pumpa za goriv</span></div></div>
<div class="c r sel sm" style="right:102.30px;top:195.90px;height:9.40px;line-height:9.40px"><span>1208</span></div>
<div class="c r sel sm" style="right:44.20px;top:195.90px;height:9.40px;line-height:9.40px"><span>1</span></div>
<div class="c r sel sm" style="right:15.30px;top:195.90px;height:9.40px;line-height:9.40px"><span>1,894.78</span></div>
<div class="a" style="left:648.0px;top:204.6px;width:0.8px;height:9.4px;background:#ececf0"></div>
<div class="a" style="left:694.1px;top:204.6px;width:0.8px;height:9.4px;background:#ececf0"></div>
<div class="a" style="left:706.8px;top:204.6px;width:0.8px;height:9.4px;background:#ececf0"></div>
<div class="a" style="left:630.5px;top:213.60px;width:105px;height:0.8px;background:#ececf0"></div>
<div class="a" style="left:649.5px;top:204.6px;width:44.60000000000002px;height:9.4px;overflow:hidden"><div class="c dk sm" style="left:0.40px;top:0.70px;height:9.40px;line-height:9.40px"><span>Aksijalni oslonac ru</span></div></div>
<div class="c r dk sm" style="right:102.30px;top:205.30px;height:9.40px;line-height:9.40px"><span>3396</span></div>
<div class="c r dk sm" style="right:44.20px;top:205.30px;height:9.40px;line-height:9.40px"><span>1</span></div>
<div class="c r dk sm" style="right:15.30px;top:205.30px;height:9.40px;line-height:9.40px"><span>173.62</span></div>
<div class="a" style="left:648.0px;top:214.0px;width:0.8px;height:9.4px;background:#ececf0"></div>
<div class="a" style="left:694.1px;top:214.0px;width:0.8px;height:9.4px;background:#ececf0"></div>
<div class="a" style="left:706.8px;top:214.0px;width:0.8px;height:9.4px;background:#ececf0"></div>
<div class="a" style="left:630.5px;top:223.00px;width:105px;height:0.8px;background:#ececf0"></div>
<div class="a" style="left:649.5px;top:214.0px;width:44.60000000000002px;height:9.4px;overflow:hidden"><div class="c dk sm" style="left:0.40px;top:0.70px;height:9.40px;line-height:9.40px"><span>AC pumpa za goriv</span></div></div>
<div class="c r dk sm" style="right:102.30px;top:214.70px;height:9.40px;line-height:9.40px"><span>7085</span></div>
<div class="c r dk sm" style="right:44.20px;top:214.70px;height:9.40px;line-height:9.40px"><span>1</span></div>
<div class="c r dk sm" style="right:15.30px;top:214.70px;height:9.40px;line-height:9.40px"><span>1,590.60</span></div>
<div class="a" style="left:735.5px;top:186px;width:8.5px;height:296.5px;background:#f0f0f0"></div>
<div class="a" style="left:736px;top:195.2px;width:7.7px;height:166.8px;background:#c8c8c8"></div>
<svg class="a" style="left:737.5px;top:188.5px" width="5" height="4" viewBox="0 0 5 4"><path d="M0.5 3.2 L2.5 1 L4.5 3.2" stroke="#333" stroke-width="0.9" fill="none"/></svg>
<svg class="a" style="left:737.5px;top:475.5px" width="5" height="4" viewBox="0 0 5 4"><path d="M0.5 0.8 L2.5 3 L4.5 0.8" stroke="#333" stroke-width="0.9" fill="none"/></svg>
<div class="c hd" style="right:15px;top:483.6px;height:9px;line-height:9px;color:#111"><span style="transform-origin:100% 50%;transform:scaleX(0.73)">UKUPNO: 3,659.00</span></div>
</body></html>
